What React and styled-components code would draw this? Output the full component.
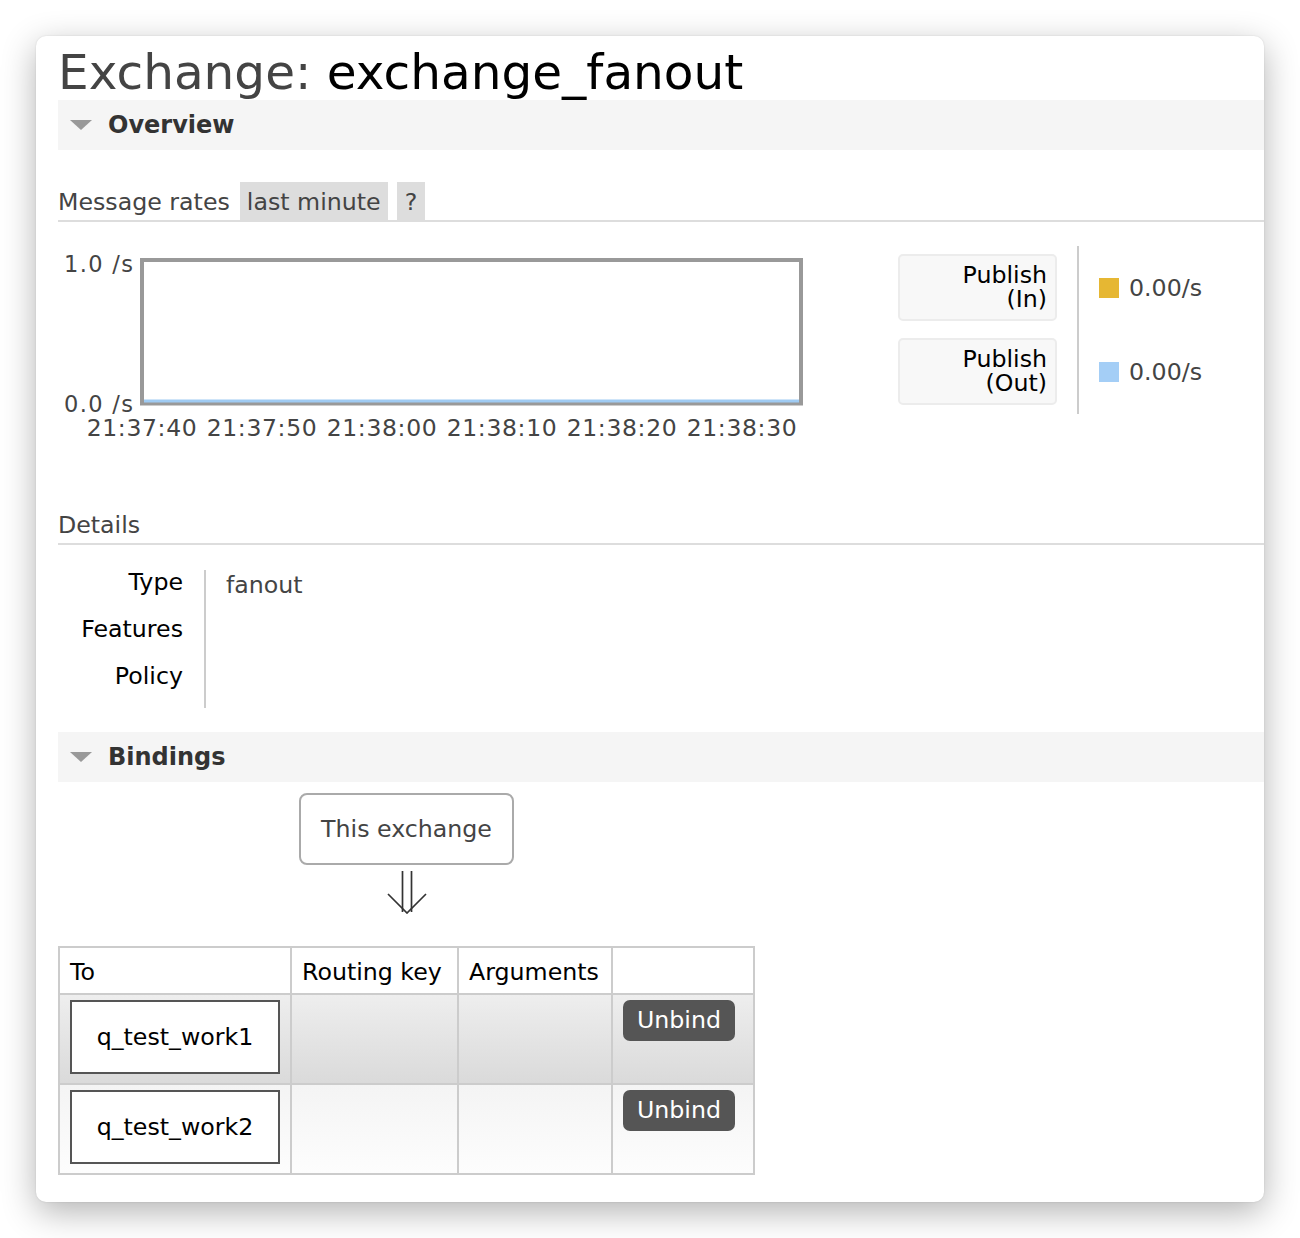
import React from 'react';
import styled, { createGlobalStyle } from 'styled-components';

const GlobalStyle = createGlobalStyle`
  html, body {
    margin: 0;
    padding: 0;
    background: #fff;
  }
  body {
    font-family: "DejaVu Sans", Verdana, sans-serif;
    font-size: 23.7px;
    line-height: 24px;
    color: #444;
  }
`;

const Page = styled.div`
  padding: 36px;
`;

const Window = styled.div`
  box-sizing: border-box;
  width: 1228px;
  height: 1166px;
  padding-left: 22px;
  background: #fff;
  border-radius: 10px;
  box-shadow: 0 10px 34px rgba(0, 0, 0, 0.3), 0 0 2px rgba(0, 0, 0, 0.12);
  overflow: hidden;
`;

const Title = styled.h1`
  margin: 0;
  padding-top: 9px;
  font-size: 48.5px;
  line-height: 55px;
  font-weight: normal;
  color: #444;
  white-space: nowrap;

  span {
    color: #000;
  }
`;

const SectionBar = styled.div`
  display: flex;
  align-items: center;
  gap: 16px;
  height: 50px;
  margin-top: ${(p) => p.$top || 0}px;
  padding-left: 12px;
  background: #f5f5f5;
  font-size: 24px;
  font-weight: bold;
  color: #333;
`;

const Caret = styled.span`
  width: 0;
  height: 0;
  border-left: 11.5px solid transparent;
  border-right: 11.5px solid transparent;
  border-top: 10px solid #999;
`;

const SubHeading = styled.div`
  display: flex;
  align-items: baseline;
  margin-top: ${(p) => p.$top}px;
  padding-bottom: ${(p) => p.$pad || 0}px;
  border-bottom: 2px solid #ddd;
  color: #444;
`;

const RangeTag = styled.span`
  margin-left: ${(p) => p.$gap}px;
  padding: 8px ${(p) => p.$px}px 6px;
  background: #ddd;
  color: #444;
`;

const ChartRow = styled.div`
  display: flex;
  align-items: flex-start;
  margin-top: 24px;
`;

const ChartSvg = styled.svg`
  display: block;
  flex: none;
  font-family: "DejaVu Sans", Verdana, sans-serif;
`;

const Legend = styled.table`
  border-collapse: collapse;
  margin-left: 94px;
`;

const LegendKey = styled.th`
  padding: 8px 20px 9px 0;
  font-weight: normal;
`;

const KeyButton = styled.div`
  box-sizing: border-box;
  width: 159px;
  height: 67px;
  padding: 7px 8px 0;
  text-align: right;
  color: #000;
  background: #f8f8f8;
  border: 2px solid #ececec;
  border-radius: 5px;
`;

const LegendValue = styled.td`
  padding-left: 20px;
  border-left: 2px solid #ccc;
  vertical-align: middle;
  white-space: nowrap;
`;

const Swatch = styled.span`
  display: inline-block;
  width: 20px;
  height: 20px;
  margin-right: 10px;
  vertical-align: -2px;
  background: ${(p) => p.$color};
`;

const DetailsTable = styled.table`
  border-collapse: collapse;
  margin-top: 25px;
`;

const DetailLabel = styled.th`
  width: 125px;
  padding: 0 21px ${(p) => (p.$last ? 20 : 23)}px 0;
  text-align: right;
  vertical-align: top;
  font-weight: normal;
  color: #000;
`;

const DetailValue = styled.td`
  min-width: 200px;
  padding: 3px 0 ${(p) => (p.$last ? 17 : 20)}px 20px;
  border-left: 2px solid #ccc;
  vertical-align: top;
  color: #444;
`;

const Diagram = styled.div`
  display: flex;
  flex-direction: column;
  align-items: center;
  width: fit-content;
  margin-top: 11px;
`;

const ThisExchange = styled.div`
  box-sizing: border-box;
  height: 72px;
  padding: 0 20px;
  line-height: 68px;
  border: 2px solid #aaa;
  border-radius: 8px;
  color: #444;
`;

const Arrow = styled.svg`
  display: block;
  margin: 6px 0 32px;
`;

const BindTable = styled.table`
  width: 695px;
  table-layout: fixed;
  border-collapse: collapse;
`;

const Col = styled.col`
  width: ${(p) => p.$w}px;
`;

const HeadCell = styled.th`
  padding: 12px 10px 9px;
  border: 2px solid #ccc;
  text-align: left;
  font-weight: normal;
  color: #000;
  background: #fff;
  white-space: nowrap;
`;

const Cell = styled.td`
  padding: 5px 10px 9px;
  border: 2px solid #ccc;
  vertical-align: top;
  background: ${(p) =>
    p.$alt === 1
      ? 'linear-gradient(#eeeeee, #dadada)'
      : 'linear-gradient(#f4f4f4, #fdfdfd)'};
`;

const QueueBox = styled.div`
  box-sizing: border-box;
  width: 210px;
  height: 74px;
  line-height: 70px;
  text-align: center;
  color: #000;
  background: #fff;
  border: 2px solid #555;
`;

const UnbindButton = styled.button`
  display: block;
  width: 112px;
  height: 41px;
  padding: 0;
  border: none;
  border-radius: 7px;
  background: #555;
  color: #fff;
  font-family: inherit;
  font-size: 23.7px;
  line-height: 41px;
`;

const ticks = ['21:37:40', '21:37:50', '21:38:00', '21:38:10', '21:38:20', '21:38:30'];

const series = [
  { name: 'Publish', sub: '(In)', color: '#e6b733', value: '0.00/s' },
  { name: 'Publish', sub: '(Out)', color: '#a4cef6', value: '0.00/s' },
];

const bindings = ['q_test_work1', 'q_test_work2'];

const RateChart = () => (
  <ChartSvg width="746" height="198" viewBox="0 0 746 198">
    <rect x="84" y="14" width="659" height="143.5" fill="#fff" stroke="#999" strokeWidth="4" />
    <line x1="86" y1="155" x2="741" y2="155" stroke="#9fcbf3" strokeWidth="3" />
    <text x="75" y="26" fontSize="22.5" fill="#444" textAnchor="end" textLength="69">
      1.0 /s
    </text>
    <text x="75" y="165.5" fontSize="22.5" fill="#444" textAnchor="end" textLength="69">
      0.0 /s
    </text>
    {ticks.map((t, i) => (
      <text
        key={t}
        x={83.7 + i * 120 - 55}
        y="190"
        fontSize="23.5"
        fill="#444"
        textLength="110"
      >
        {t}
      </text>
    ))}
  </ChartSvg>
);

export default function App() {
  return (
    <>
      <GlobalStyle />
      <Page>
        <Window>
          <Title>
            Exchange: <span>exchange_fanout</span>
          </Title>

          <SectionBar>
            <Caret />
            Overview
          </SectionBar>

          <SubHeading $top={32}>
            <span>Message rates</span>
            <RangeTag $gap={10} $px={7}>last minute</RangeTag>
            <RangeTag $gap={9} $px={8}>?</RangeTag>
          </SubHeading>

          <ChartRow>
            <RateChart />
            <Legend>
              <tbody>
                {series.map((s) => (
                  <tr key={s.sub}>
                    <LegendKey>
                      <KeyButton>
                        {s.name}
                        <br />
                        {s.sub}
                      </KeyButton>
                    </LegendKey>
                    <LegendValue>
                      <Swatch $color={s.color} />
                      {s.value}
                    </LegendValue>
                  </tr>
                ))}
              </tbody>
            </Legend>
          </ChartRow>

          <SubHeading $top={69} $pad={6}>
            <span>Details</span>
          </SubHeading>

          <DetailsTable>
            <tbody>
              <tr>
                <DetailLabel>Type</DetailLabel>
                <DetailValue>fanout</DetailValue>
              </tr>
              <tr>
                <DetailLabel>Features</DetailLabel>
                <DetailValue />
              </tr>
              <tr>
                <DetailLabel $last>Policy</DetailLabel>
                <DetailValue $last />
              </tr>
            </tbody>
          </DetailsTable>

          <SectionBar $top={24}>
            <Caret />
            Bindings
          </SectionBar>

          <Diagram>
            <ThisExchange>This exchange</ThisExchange>
            <Arrow width="40" height="43" viewBox="0 0 40 43">
              <g stroke="#333" strokeWidth="1.7" fill="none">
                <line x1="15.5" y1="0" x2="15.5" y2="41" />
                <line x1="24.5" y1="0" x2="24.5" y2="41" />
                <polyline points="1,23 20,42 39,23" />
              </g>
            </Arrow>
            <BindTable>
              <colgroup>
                <Col $w={232} />
                <Col $w={167} />
                <Col $w={154} />
                <Col $w={142} />
              </colgroup>
              <thead>
                <tr>
                  <HeadCell>To</HeadCell>
                  <HeadCell>Routing key</HeadCell>
                  <HeadCell>Arguments</HeadCell>
                  <HeadCell />
                </tr>
              </thead>
              <tbody>
                {bindings.map((q, i) => (
                  <tr key={q}>
                    <Cell $alt={i + 1}>
                      <QueueBox>{q}</QueueBox>
                    </Cell>
                    <Cell $alt={i + 1} />
                    <Cell $alt={i + 1} />
                    <Cell $alt={i + 1}>
                      <UnbindButton>Unbind</UnbindButton>
                    </Cell>
                  </tr>
                ))}
              </tbody>
            </BindTable>
          </Diagram>
        </Window>
      </Page>
    </>
  );
}
